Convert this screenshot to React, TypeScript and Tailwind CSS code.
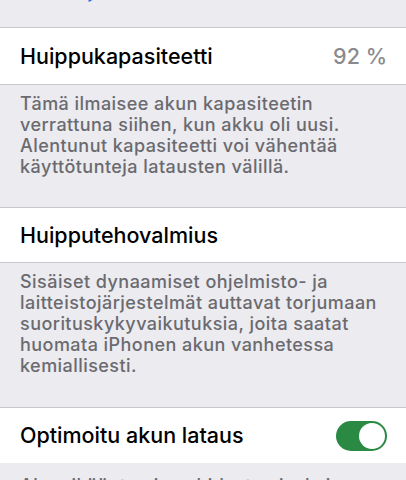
import React from "react";

const font = { fontFamily: "Inter, 'Noto Sans', sans-serif" };

function Separator() {
  return <div className="h-px bg-[#c8c8cc]" />;
}

function Footer({ children, top = "pt-[8px]" }: { children: React.ReactNode; top?: string }) {
  return (
    <div className={`px-5 ${top} text-[18px] font-medium leading-[21px] text-[#6a6a6f] tracking-[0.45px]`}>
      {children}
    </div>
  );
}

export default function App() {
  return (
    <div className="w-[406px] h-[480px] overflow-hidden bg-[#ebebf0]" style={font}>
      <div className="h-[27px] overflow-hidden">
        <div className="pl-[16px] -mt-[19px] text-[18px] font-medium leading-[21px] text-[#1a73e8]">
          Lisätietoja…
        </div>
      </div>
      <Separator />
      <div className="bg-white h-[56px] px-5 flex items-center justify-between">
        <span className="text-[21.5px] font-medium text-black">Huippukapasiteetti</span>
        <span className="text-[21.5px] font-medium text-[#8a8a8e] -mr-[1px]">92 %</span>
      </div>
      <Separator />
      <div className="h-[122px]">
        <Footer>
          Tämä ilmaisee akun kapasiteetin verrattuna siihen, kun akku oli uusi. Alentunut
          kapasiteetti voi vähentää käyttötunteja latausten välillä.
        </Footer>
      </div>
      <Separator />
      <div className="bg-white h-[54px] px-5 flex items-center">
        <span className="text-[21.5px] font-medium text-black">Huipputehovalmius</span>
      </div>
      <Separator />
      <div className="h-[144px]">
        <Footer>
          Sisäiset dynaamiset ohjelmisto- ja laitteistojärjestelmät auttavat torjumaan
          suorituskykyvaikutuksia, joita saatat huomata iPhonen akun vanhetessa kemiallisesti.
        </Footer>
      </div>
      <Separator />
      <div className="bg-white h-[55px] px-5 flex items-center justify-between">
        <span className="text-[21.5px] font-medium text-black">Optimoitu akun lataus</span>
        <div className="w-[51px] h-[30px] rounded-full bg-[#2a8a43] flex items-center justify-end pr-[2px] mr-[-1px]">
          <div className="w-[26px] h-[26px] rounded-full bg-white" />
        </div>
      </div>
      <Footer top="pt-[12px]">
        Akun ikääntymisen hidastamiseksi iPhone oppii päivittäisistä lataustottumuksistasi.
      </Footer>
    </div>
  );
}
